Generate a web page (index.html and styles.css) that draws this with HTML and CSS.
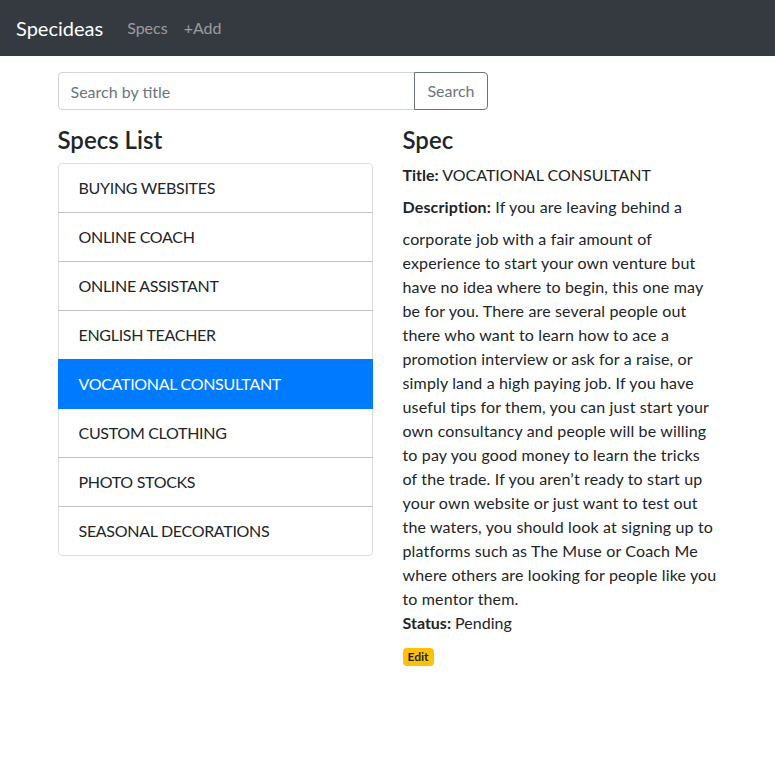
FILE: index.html
```html
<!DOCTYPE html>
<html lang="en">
<head>
<meta charset="utf-8">
<title>Specideas</title>
<link rel="stylesheet" href="styles.css">
</head>
<body>
<nav class="navbar">
  <a class="brand" href="#">Specideas</a>
  <div class="nav">
    <a class="nav-link" href="#">Specs</a>
    <a class="nav-link" href="#">+Add</a>
  </div>
</nav>
<div class="container">
  <div class="list-row">
    <div class="col-8">
      <div class="input-group">
        <input class="form-control" type="text" placeholder="Search by title">
        <button class="btn-outline" type="button">Search</button>
      </div>
    </div>
    <div class="col-6">
      <h4 class="heading">Specs List</h4>
      <ul class="list-group">
        <li class="list-item">BUYING WEBSITES</li>
        <li class="list-item">ONLINE COACH</li>
        <li class="list-item">ONLINE ASSISTANT</li>
        <li class="list-item">ENGLISH TEACHER</li>
        <li class="list-item active">VOCATIONAL CONSULTANT</li>
        <li class="list-item">CUSTOM CLOTHING</li>
        <li class="list-item">PHOTO STOCKS</li>
        <li class="list-item">SEASONAL DECORATIONS</li>
      </ul>
    </div>
    <div class="col-6">
      <h4 class="heading">Spec</h4>
      <div class="field"><strong class="label">Title:</strong> VOCATIONAL CONSULTANT</div>
      <div class="field description"><strong class="label">Description:</strong> If you are leaving behind a corporate job with a fair amount of experience to start your own venture but have no idea where to begin, this one may be for you. There are several people out there who want to learn how to ace a promotion interview or ask for a raise, or simply land a high paying job. If you have useful tips for them, you can just start your own consultancy and people will be willing to pay you good money to learn the tricks of the trade. If you aren’t ready to start up your own website or just want to test out the waters, you should look at signing up to platforms such as The Muse or Coach Me where others are looking for people like you to mentor them.</div>
      <div class="field"><strong class="label">Status:</strong> Pending</div>
      <a class="badge" href="#">Edit</a>
    </div>
  </div>
</div>
</body>
</html>
```
FILE: styles.css
```css
* { box-sizing: border-box; }
html, body {
  margin: 0;
  padding: 0;
}
body {
  font-family: Lato, "Open Sans", sans-serif;
  font-size: 16px;
  line-height: 24px;
  color: #212529;
  background: #fff;
}
a { text-decoration: none; }

.navbar {
  display: flex;
  align-items: center;
  background: #343a40;
  padding: 8px 16px;
  height: 56px;
}
.brand {
  color: #fff;
  font-size: 20px;
  line-height: 30px;
  padding: 5px 0;
  margin-right: 16px;
}
.nav { display: flex; }
.nav-link {
  color: rgba(255,255,255,.5);
  padding: 8px;
  line-height: 24px;
}

.container {
  width: 720px;
  margin: 16px auto 0;
  padding: 0 15px;
}
.list-row {
  display: flex;
  flex-wrap: wrap;
  max-width: 750px;
}
.col-8 { flex: 0 0 66.6667%; max-width: 66.6667%; padding: 0 15px; }
.col-6 { flex: 0 0 50%; max-width: 50%; padding: 0 15px; }

.input-group {
  display: flex;
  margin-bottom: 16px;
}
.form-control {
  flex: 1 1 auto;
  min-width: 0;
  height: 38px;
  padding: 6px 12px;
  font: inherit;
  color: #495057;
  border: 1px solid #ced4da;
  border-radius: 4px 0 0 4px;
  outline: none;
}
.form-control::placeholder { color: #6c757d; }
.btn-outline {
  height: 38px;
  padding: 6px 12px;
  font: inherit;
  color: #6c757d;
  background: transparent;
  border: 1px solid #6c757d;
  border-radius: 0 4px 4px 0;
  margin-left: -1px;
}

.heading {
  font-size: 24px;
  font-weight: 600;
  line-height: 1.2;
  margin: 0 0 8px;
}

.list-group {
  list-style: none;
  margin: 0;
  padding: 0;
}
.list-item {
  padding: 12px 20px;
  border: 1px solid rgba(0,0,0,.125);
  margin-bottom: -1px;
  letter-spacing: -0.3px;
}
.list-item:first-child { border-radius: 4px 4px 0 0; }
.list-item:last-child { border-radius: 0 0 4px 4px; margin-bottom: 0; }
.list-item.active {
  background: #007bff;
  border-color: #007bff;
  color: #fff;
  position: relative;
}

.description {
  letter-spacing: 0.15px;
}

.label {
  display: inline-block;
  margin-bottom: 8px;
  font-weight: 700;
}

.badge {
  display: inline-block;
  font-size: 12px;
  font-weight: 700;
  line-height: 1;
  padding: 3px 5px;
  border-radius: 4px;
  background: #ffc107;
  color: #212529;
}
```
